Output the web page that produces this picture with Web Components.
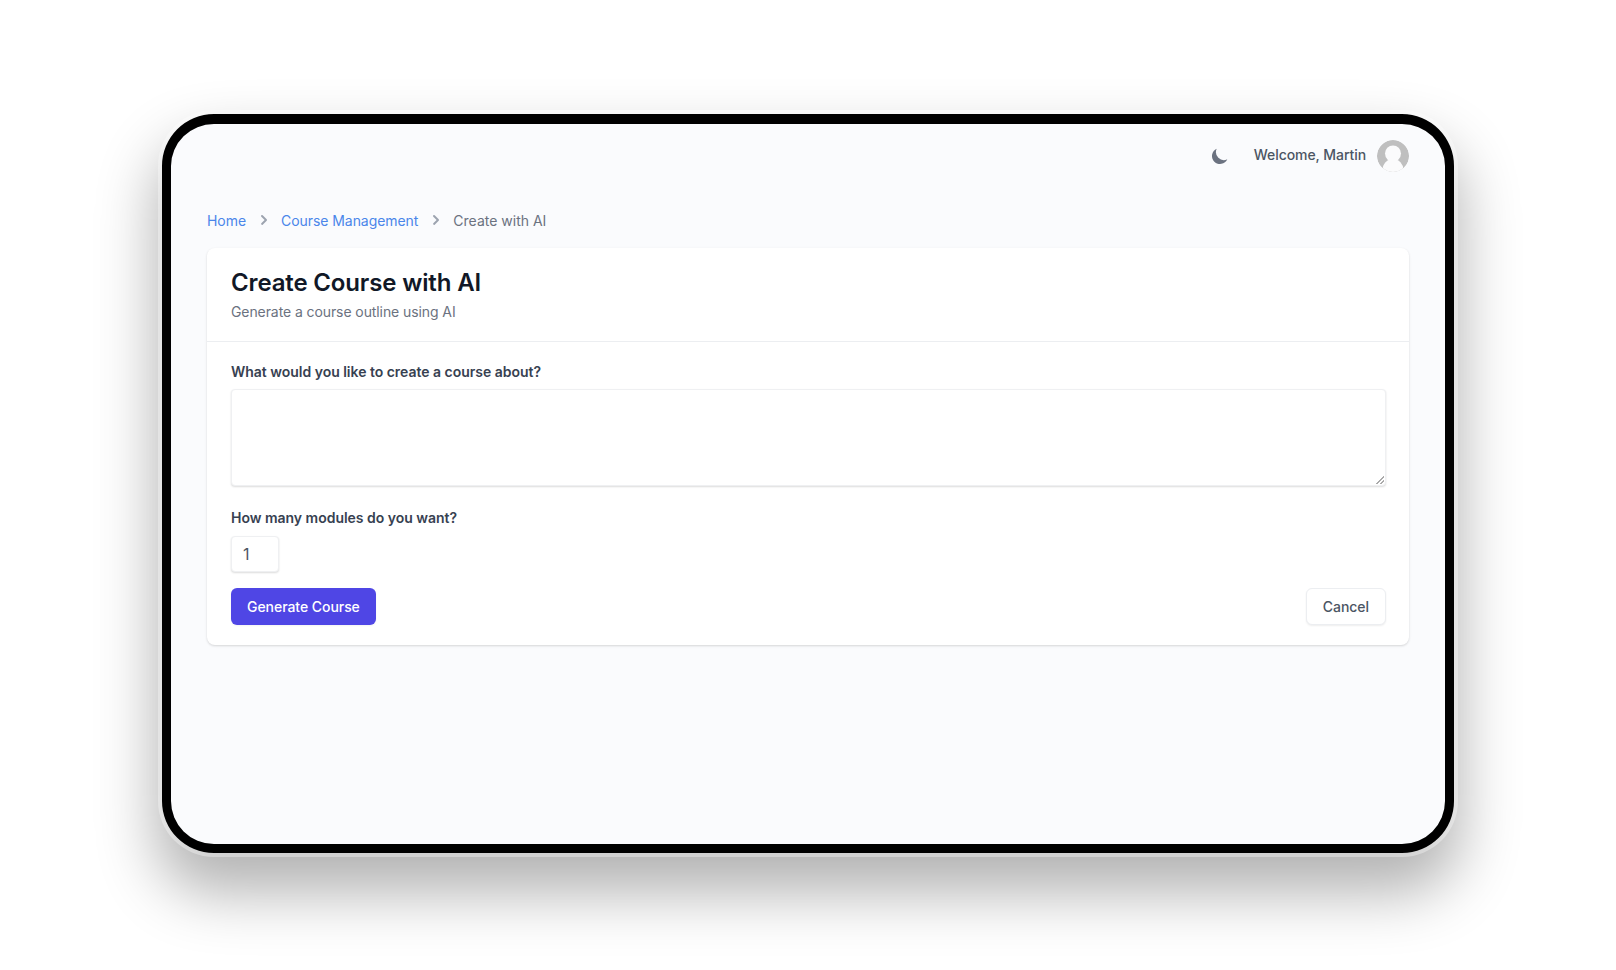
<!DOCTYPE html>
<html lang="en">
<head>
<meta charset="utf-8">
<title>Create Course with AI</title>
<style>
  html, body { margin: 0; background: #fff; }
  body { font-family: Inter, "Liberation Sans", sans-serif; overflow: hidden; height: 970px; }
</style>
</head>
<body>
<device-frame>
  <top-bar name="Martin"></top-bar>
  <bread-crumbs></bread-crumbs>
  <course-card title-text="Create Course with AI" sub-text="Generate a course outline using AI">
    <form-field label="What would you like to create a course about?" kind="textarea"></form-field>
    <form-field label="How many modules do you want?" kind="number" value="1"></form-field>
    <app-button slot="actions" variant="primary">Generate Course</app-button>
    <app-button slot="actions" variant="plain">Cancel</app-button>
  </course-card>
</device-frame>

<script>
function shadow(el, html) {
  el.attachShadow({ mode: "open" }).innerHTML = html
}

class DeviceFrame extends HTMLElement {
  connectedCallback() {
    shadow(this, `
    <style>
      :host {
        display: block;
        box-sizing: border-box;
        width: 1292px;
        height: 739px;
        margin: 114px 0 0 162px;
        background: #fafbfd;
        border: 10px solid #000;
        border-left-width: 9px;
        border-right-width: 9px;
        border-bottom-width: 9px;
        border-radius: 52px;
        box-shadow: 0 0 0 4px rgba(255,255,255,.35), 0 34px 60px 6px rgba(0,0,0,.3);
      }
      .inner { padding: 0 36px; }
    </style>
    <div class="inner"><slot></slot></div>`)
  }
}

class TopBar extends HTMLElement {
  connectedCallback() {
    const name = this.getAttribute("name")
    shadow(this, `
    <style>
      :host { display: flex; align-items: center; justify-content: flex-end; height: 64px; font-size: 14px; color: #4b5563; font-weight: 500; }
      svg.moon { width: 20px; height: 20px; margin-right: 24px; color: #6b7280; }
      span { letter-spacing: -.07px; margin-bottom: 3px; }
      .avatar { width: 32px; height: 32px; margin-left: 11px; border-radius: 50%; }
    </style>
    <svg class="moon" viewBox="0 0 20 20" fill="currentColor"><path d="M17.293 13.293A8 8 0 0 1 6.707 2.707a8.001 8.001 0 1 0 10.586 10.586z"/></svg>
    <span>Welcome, ${name}</span>
    <svg class="avatar" viewBox="0 0 32 32">
      <defs><clipPath id="c"><circle cx="16" cy="16" r="16"/></clipPath></defs>
      <g clip-path="url(#c)">
        <rect width="32" height="32" fill="#bfbfbf"/>
        <circle cx="16" cy="13.5" r="8" fill="#fbfbfc"/>
        <ellipse cx="16" cy="30" rx="10.5" ry="11" fill="#fbfbfc"/>
      </g>
    </svg>`)
  }
}

class BreadCrumbs extends HTMLElement {
  connectedCallback() {
    const chevron = `<svg viewBox="0 0 20 20" fill="currentColor"><path fill-rule="evenodd" d="M7.3 5.3a1 1 0 0 1 1.4 0l4 4a1 1 0 0 1 0 1.4l-4 4a1 1 0 0 1-1.4-1.4L10.6 10 7.3 6.7a1 1 0 0 1 0-1.4z"/></svg>`
    shadow(this, `
    <style>
      :host { display: flex; align-items: center; height: 20px; margin-top: 22px; margin-bottom: 18px; font-size: 14px; color: #6b7280; }
      a { color: #4a86ea; text-decoration: none; letter-spacing: -.06px; }
      svg { width: 20px; height: 20px; margin: 0 7.5px; color: #9ca3af; }
    </style>
    <a href="#">Home</a>${chevron}<a href="#">Course Management</a>${chevron}<span>Create with AI</span>`)
  }
}

class CourseCard extends HTMLElement {
  connectedCallback() {
    shadow(this, `
    <style>
      :host { display: block; background: #fff; border-radius: 8px; box-shadow: 0 1px 3px rgba(0,0,0,.1), 0 1px 2px rgba(0,0,0,.06); }
      header { padding: 19px 24px 19px; border-bottom: 1px solid #eceef1; }
      h1 { margin: 0; font-size: 24px; line-height: 32px; font-weight: 600; color: #111827; letter-spacing: -.15px; }
      p { margin: 3px 0 0; font-size: 14px; line-height: 20px; color: #6b7280; letter-spacing: -.09px; }
      .body { padding: 20px 23px 20px 24px; display: flex; flex-direction: column; gap: 22px; }
      .actions { display: flex; justify-content: space-between; margin-top: -6px; }
    </style>
    <header><h1>${this.getAttribute("title-text")}</h1><p>${this.getAttribute("sub-text")}</p></header>
    <div class="body">
      <slot></slot>
      <div class="actions"><slot name="actions"></slot></div>
    </div>`)
  }
}

class FormField extends HTMLElement {
  connectedCallback() {
    const control = this.getAttribute("kind") === "textarea"
      ? `<textarea></textarea>`
      : `<input type="text" value="${this.getAttribute("value")}">`
    shadow(this, `
    <style>
      :host { display: block; }
      label { display: block; font-size: 14px; line-height: 20px; font-weight: 600; color: #374151; margin-bottom: 7px; letter-spacing: -.02px; }
      :host([kind=number]) label { margin-bottom: 8px; }
      textarea, input { display: block; box-sizing: border-box; border: 1px solid #eff0f2; border-radius: 4px; background: #fff; box-shadow: 0 1px 2px rgba(0,0,0,.14); outline: none; font: 400 16px Inter, sans-serif; color: #4b5563; }
      textarea { width: 100%; height: 97px; resize: vertical; padding: 8px 12px; }
      textarea::-webkit-resizer { background: linear-gradient(135deg, transparent 48%, #aaa 48%, #aaa 58%, transparent 58%, transparent 72%, #aaa 72%, #aaa 84%, transparent 84%) right 1px bottom 1px / 8px 8px no-repeat; }
      input { width: 48px; height: 36px; padding: 0 11px; }
    </style>
    <label>${this.getAttribute("label")}</label>${control}`)
  }
}

class AppButton extends HTMLElement {
  connectedCallback() {
    shadow(this, `
    <style>
      :host { display: inline-block; }
      button { display: block; height: 37px; padding: 0 16px; border-radius: 6px; font: 500 14px Inter, sans-serif; letter-spacing: -.05px; cursor: pointer; }
      :host([variant=primary]) button { background: #4f46e5; color: #fff; border: none; box-shadow: 0 1px 2px rgba(0,0,0,.05); }
      :host([variant=plain]) button { background: #fff; color: #4b5563; border: 1px solid #eceef1; box-shadow: 0 1px 2px rgba(0,0,0,.07); }
    </style>
    <button type="button"><slot></slot></button>`)
  }
}

customElements.define("device-frame", DeviceFrame)
customElements.define("top-bar", TopBar)
customElements.define("bread-crumbs", BreadCrumbs)
customElements.define("course-card", CourseCard)
customElements.define("form-field", FormField)
customElements.define("app-button", AppButton)
</script>
</body>
</html>
